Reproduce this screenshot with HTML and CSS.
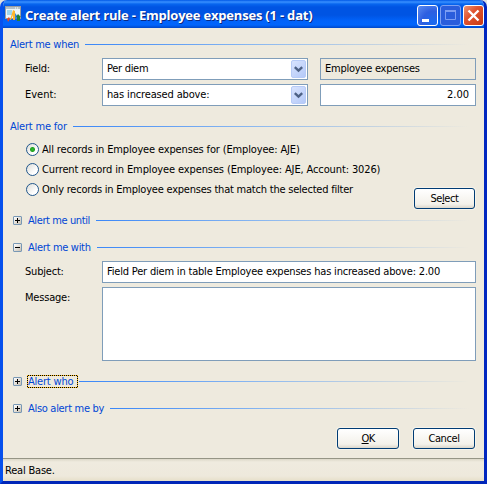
FILE: index.html
```
<!DOCTYPE html>
<html lang="en">
<head>
<meta charset="utf-8">
<title>Create alert rule</title>
<link rel="stylesheet" href="styles.css">
</head>
<body>
<div class="window">
  <header class="titlebar">
    <svg class="app-icon" width="16" height="16" viewBox="0 0 16 16">
      <rect x=".5" y=".5" width="15" height="12" fill="#edf5fa" stroke="#9b9da0"/>
      <path d="M1 2h14" stroke="#b4c0c8" stroke-width="2"/>
      <path d="M10 2h1M12 2h1" stroke="#fff"/>
      <path d="M2 4h5v5H2z" fill="#9ed5ef"/>
      <path d="M2 13l2-2 1 2-2 3z" fill="#e54b22"/>
      <path d="M5 14 8 4l2 1v9H8V9l-2 5z" fill="#ffb52d"/>
      <path d="M10 13V7l3 4v2z" fill="#3986d8"/>
      <path d="M12 15v-4h-1l2-3 3 3h-1v4z" fill="#277d35"/>
    </svg>
    <h1 class="title">Create alert rule - Employee expenses (1 - dat)</h1>
    <div class="controls">
      <span class="ctl"><svg width="21" height="21"><path d="M5 14h7v3H5z" fill="#fff"/></svg></span>
      <span class="ctl ctl-disabled"><svg width="21" height="21"><path d="M5.5 5.5h10v9h-10z" fill="none" stroke="#7c9df3"/><path d="M5 6h11" stroke="#7c9df3" stroke-width="2"/></svg></span>
      <span class="ctl ctl-close"><svg width="21" height="21"><path d="m5.5 5.5 10 10M15.5 5.5l-10 10" stroke="#fff" stroke-width="2.4"/></svg></span>
    </div>
  </header>
  <main class="content">
    <h2 class="group"><span class="t-when">Alert me when</span></h2>
    <div class="row first">
      <span class="label t-field">Field:</span>
      <div class="box combo"><span class="t-diem">Per diem</span><span class="drop"><svg width="9" height="7"><path d="m.8 1.2 3.7 3.5 3.7-3.5" fill="none" stroke="#4d6185" stroke-width="2.4"/></svg></span></div>
      <div class="box side readonly"><span class="t-emp">Employee expenses</span></div>
    </div>
    <div class="row">
      <span class="label t-event">Event:</span>
      <div class="box combo"><span class="t-inc">has increased above:</span><span class="drop"><svg width="9" height="7"><path d="m.8 1.2 3.7 3.5 3.7-3.5" fill="none" stroke="#4d6185" stroke-width="2.4"/></svg></span></div>
      <div class="box side number"><span class="t-num">2.00</span></div>
    </div>
    <h2 class="group g-for"><span class="t-for">Alert me for</span></h2>
    <div class="choices">
      <div class="radios">
        <div class="radio"><i class="dot on"></i><span class="t-r1">All records in Employee expenses for (Employee: AJE)</span></div>
        <div class="radio"><i class="dot"></i><span class="t-r2">Current record in Employee expenses (Employee: AJE, Account: 3026)</span></div>
        <div class="radio"><i class="dot"></i><span class="t-r3">Only records in Employee expenses that match the selected filter</span></div>
      </div>
      <div class="btn btn-select"><span class="t-select">Se<u>l</u>ect</span></div>
    </div>
    <h2 class="group g-until"><i class="toggle plus"></i><span class="t-until">Alert me until</span></h2>
    <h2 class="group g-with"><i class="toggle"></i><span class="t-with">Alert me with</span></h2>
    <div class="row first">
      <span class="label t-subject">Subject:</span>
      <div class="box wide"><span class="t-text">Field Per diem in table Employee expenses has increased above: 2.00</span></div>
    </div>
    <div class="row">
      <span class="label t-message">Message:</span>
      <div class="box wide area"></div>
    </div>
    <h2 class="group g-who"><i class="toggle plus"></i><span class="focus"><span class="t-who">Alert who</span></span></h2>
    <h2 class="group g-by"><i class="toggle plus"></i><span class="t-by">Also alert me by</span></h2>
    <div class="actions">
      <div class="btn"><span class="t-ok"><u>O</u>K</span></div>
      <div class="btn"><span class="t-cancel">Cancel</span></div>
    </div>
  </main>
  <footer class="status"><span class="t-real">Real Base.</span></footer>
</div>
</body>
</html>
```
FILE: styles.css
```
* { box-sizing: border-box; }
body {
  margin: 0;
  background: #dfe0df;
  font: 11px/16px "DejaVu Sans Condensed", "DejaVu Sans", sans-serif;
  font-stretch: condensed;
  color: #000;
  white-space: nowrap;
}
.window {
  width: 487px;
  height: 484px;
  display: flex;
  flex-direction: column;
  border: solid;
  border-width: 0 3px 3px;
  border-color: #0046e0 #0026c0 #0026b8 #0650ed;
  border-radius: 7px 7px 0 0;
  background: #eeeade;
  overflow: hidden;
}
.titlebar {
  height: 28px;
  flex: none;
  display: flex;
  align-items: center;
  margin: 0 -3px;
  padding: 3px 5px 0;
  background: linear-gradient(#0058e6 0, #3990ff 2px, #0866ef 4px, #0054e3 7px, #0054e3 15px, #0163fa 21px, #0065fc 25px, #0047c8 28px);
}
.app-icon { flex: none; margin-top: -3px; }
.title {
  margin: -1px 0 0 4px;
  font: bold 13px/20px "Open Sans", sans-serif;
  font-stretch: normal;
  color: #fff;
  text-shadow: 1px 1px 0 #0a2a83;
  letter-spacing: -.2px;
}
.controls { display: flex; gap: 2px; margin-left: auto; margin-right: -2px; }
.ctl {
  width: 21px;
  height: 21px;
  border: 1px solid #fff;
  border-radius: 3px;
  background: radial-gradient(circle at 80% 85%, #1a6af0, #2e5fe0 50%, #5c8df2);
}
.ctl svg { display: block; margin: -1px; }
.ctl-disabled { border-color: #7da0f2; background: #2a5ddc; }
.ctl-close { background: linear-gradient(135deg, #ee9474, #e05430 40%, #c93a12); }
.content { flex: 1; padding: 8px 8px 0 7px; }
.group {
  display: flex;
  align-items: center;
  height: 17px;
  margin: 0;
  font: inherit;
  color: #0046d5;
}
.group::after {
  content: "";
  flex: 1;
  height: 1px;
  margin: 0 7px 0 6px;
  background: linear-gradient(90deg, #3a87f8, #8bb8f0 45%, #c2d2e1 75%, #eeeade);
}
.g-for { margin-top: 12px; }
.g-until { margin-top: 3px; }
.g-with { margin-top: 10px; }
.g-who { margin-top: 12px; }
.g-who::after { margin-left: 1px; }
.g-by { margin-top: 10px; }
.toggle {
  flex: none;
  width: 9px;
  height: 9px;
  margin: 0 6px 0 3px;
  border: 1px solid #7898b5;
  border-radius: 1px;
  background: linear-gradient(#000, #000) 1px 3px / 5px 1px no-repeat, linear-gradient(135deg, #fff, #c8c0b2);
}
.plus {
  background: linear-gradient(#000, #000) 1px 3px / 5px 1px no-repeat, linear-gradient(#000, #000) 3px 1px / 1px 5px no-repeat, linear-gradient(135deg, #fff, #c8c0b2);
}
.focus {
  display: flex;
  align-items: center;
  width: 51px;
  height: 13px;
  margin-left: -1px;
  padding: 1px;
  background:
    repeating-linear-gradient(90deg, #ffc020 0 1px, #000 1px 2px) top / 100% 1px no-repeat,
    repeating-linear-gradient(90deg, #ffc020 0 1px, #000 1px 2px) bottom / 100% 1px no-repeat,
    repeating-linear-gradient(#ffc020 0 1px, #000 1px 2px) left / 1px 100% no-repeat,
    repeating-linear-gradient(#ffc020 0 1px, #000 1px 2px) right / 1px 100% no-repeat;
}
.row { display: flex; margin-top: 4px; }
.row.first { margin-top: 5px; }
.label { width: 77px; height: 22px; margin-left: 15px; line-height: 21px; }
.box {
  display: flex;
  height: 22px;
  border: 1px solid #7f9db9;
  background: #fff;
  padding-left: 4px;
  line-height: 19px;
}
.combo { width: 206px; }
.drop {
  display: flex;
  align-items: center;
  justify-content: center;
  width: 15px;
  height: 18px;
  margin: 1px 1px 0 auto;
  border: 1px solid #b7cbf7;
  border-radius: 2px;
  background: linear-gradient(135deg, #d8e3fe, #b4c9f8);
}
.side { width: 156px; margin-left: 12px; }
.readonly { background: #eeeade; }
.number { justify-content: flex-end; padding-right: 6px; }
.wide { width: 374px; }
.area { height: 74px; }
.choices {
  display: flex;
  justify-content: space-between;
  align-items: flex-end;
  height: 69px;
  margin-top: 5px;
}
.radios { align-self: flex-start; padding-left: 16px; }
.radio { display: flex; height: 20px; line-height: 20px; }
.dot {
  width: 13px;
  height: 13px;
  margin: 3px 3px 0 0;
  border: 1px solid #21578c;
  border-radius: 50%;
  background: linear-gradient(135deg, #dcdcd6, #fff 70%);
}
.on { background: radial-gradient(circle, #32bb30 0, #21a121 2px, transparent 3px), linear-gradient(135deg, #dcdcd6, #fff 70%); }
.btn {
  width: 62px;
  height: 21px;
  border: 1px solid #003c74;
  border-radius: 3px;
  background: linear-gradient(#fff, #f3f1ea 80%, #dcd7cc);
  text-align: center;
  line-height: 20px;
  box-shadow: 0 0 0 1px #f5f3eb;
}
.btn-select { width: 61px; margin-right: 1px; }
.actions { display: flex; justify-content: flex-end; gap: 14px; margin: 11px 1px 0 0; }
.status {
  height: 23px;
  flex: none;
  border-top: 1px solid #959585;
  padding: 4px 0 0 2px;
  background: linear-gradient(#dcd8c8, #efebdf 3px, #eee9dc 17px, #e6dfc9);
}

/* Tracking per text */
.t-when, .t-emp { letter-spacing: -.25px; }
.t-with { letter-spacing: -.3px; }
.t-field, .t-for, .t-subject, .t-message, .t-who, .t-real { letter-spacing: -.2px; }
.t-diem, .t-by { letter-spacing: -.3px; }
.t-inc, .t-r1 { letter-spacing: -.15px; }
.t-r2 { letter-spacing: -.12px; }
.t-r3 { letter-spacing: -.22px; }
.t-text { letter-spacing: -.19px; }
.t-until, .t-select, .t-cancel { letter-spacing: -.4px; }
.t-ok { letter-spacing: -.7px; }
```
